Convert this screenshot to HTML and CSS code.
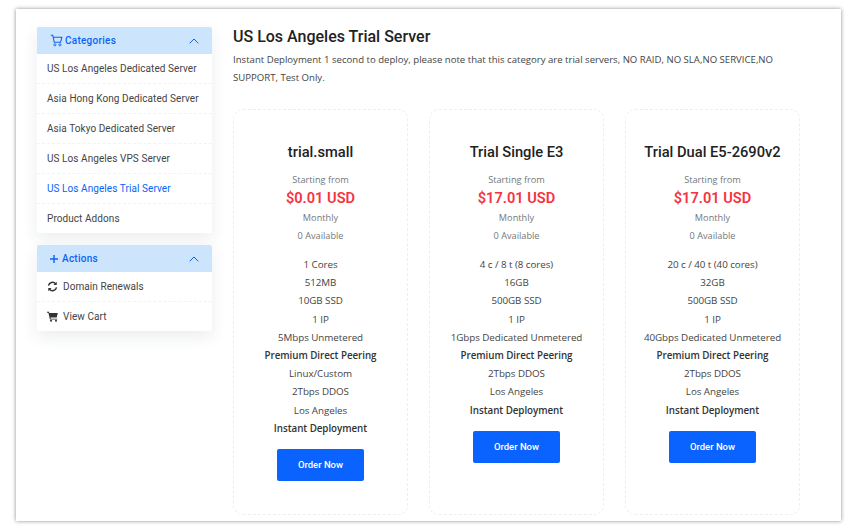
FILE: index.html
```html
<!DOCTYPE html>
<html lang="en">
<head>
<meta charset="utf-8">
<title>US Los Angeles Trial Server</title>
<link rel="stylesheet" href="styles.css">
</head>
<body>
<div class="frame">
  <aside class="sidebar">
    <section class="panel">
      <header class="panel-head">
        <svg class="head-icon" viewBox="0 0 16 16" width="13" height="13"><path d="M1 1.5h2.4l1.8 8.6h7.9l1.5-6.2H3.9" fill="none" stroke="#0a62f5" stroke-width="1.3"/><circle cx="6" cy="13.3" r="1.3" fill="none" stroke="#0a62f5" stroke-width="1.1"/><circle cx="12.2" cy="13.3" r="1.3" fill="none" stroke="#0a62f5" stroke-width="1.1"/></svg>
        <span class="head-title">Categories</span>
        <svg class="chevron" viewBox="0 0 10 6" width="10" height="6"><path d="M.7 5.3 5 1l4.3 4.3" fill="none" stroke="#0a62f5" stroke-width="1"/></svg>
      </header>
      <a class="item">US Los Angeles Dedicated Server</a>
      <a class="item">Asia Hong Kong Dedicated Server</a>
      <a class="item">Asia Tokyo Dedicated Server</a>
      <a class="item">US Los Angeles VPS Server</a>
      <a class="item active">US Los Angeles Trial Server</a>
      <a class="item">Product Addons</a>
    </section>
    <section class="panel">
      <header class="panel-head">
        <svg class="head-icon plus" viewBox="0 0 8 8" width="8" height="8"><path d="M4 0v8M0 4h8" stroke="#0a62f5" stroke-width="1.4"/></svg>
        <span class="head-title">Actions</span>
        <svg class="chevron" viewBox="0 0 10 6" width="10" height="6"><path d="M.7 5.3 5 1l4.3 4.3" fill="none" stroke="#0a62f5" stroke-width="1"/></svg>
      </header>
      <a class="item with-icon">
        <svg viewBox="0 0 12 12" width="11" height="11"><path d="M1.6 5A4.5 4.5 0 0 1 9.4 3M10.4 7A4.5 4.5 0 0 1 2.6 9" fill="none" stroke="#333" stroke-width="1.6"/><path d="M10.6.8v3.6H7zM1.4 11.2V7.6H5z" fill="#333"/></svg>
        Domain Renewals
      </a>
      <a class="item with-icon">
        <svg viewBox="0 0 12 12" width="11" height="11"><path d="M0 .8h2.2l.4 1.4h9.2l-1.2 5H3.8l.3 1.2h7v1H3.2L1.5 1.8H0z" fill="#333"/><circle cx="4.4" cy="10.6" r="1.1" fill="#333"/><circle cx="9.8" cy="10.6" r="1.1" fill="#333"/></svg>
        View Cart
      </a>
    </section>
  </aside>
  <main class="content">
    <h1 class="page-title">US Los Angeles Trial Server</h1>
    <p class="page-desc">Instant Deployment 1 second to deploy, please note that this category are trial servers, NO RAID, NO SLA,NO SERVICE,NO SUPPORT, Test Only.</p>
    <div class="cards">
      <article class="card">
        <h2 class="card-title">trial.small</h2>
        <div class="muted start">Starting from</div>
        <div class="price">$0.01 USD</div>
        <div class="muted cycle">Monthly</div>
        <div class="muted avail">0 Available</div>
        <ul class="features">
          <li>1 Cores</li><li>512MB</li><li>10GB SSD</li><li>1 IP</li><li>5Mbps Unmetered</li>
          <li class="strong">Premium Direct Peering</li><li>Linux/Custom</li><li>2Tbps DDOS</li><li>Los Angeles</li>
          <li class="strong">Instant Deployment</li>
        </ul>
        <a class="order">Order Now</a>
      </article>
      <article class="card">
        <h2 class="card-title">Trial Single E3</h2>
        <div class="muted start">Starting from</div>
        <div class="price">$17.01 USD</div>
        <div class="muted cycle">Monthly</div>
        <div class="muted avail">0 Available</div>
        <ul class="features">
          <li>4 c / 8 t (8 cores)</li><li>16GB</li><li>500GB SSD</li><li>1 IP</li><li>1Gbps Dedicated Unmetered</li>
          <li class="strong">Premium Direct Peering</li><li>2Tbps DDOS</li><li>Los Angeles</li>
          <li class="strong">Instant Deployment</li>
        </ul>
        <a class="order">Order Now</a>
      </article>
      <article class="card">
        <h2 class="card-title">Trial Dual E5-2690v2</h2>
        <div class="muted start">Starting from</div>
        <div class="price">$17.01 USD</div>
        <div class="muted cycle">Monthly</div>
        <div class="muted avail">0 Available</div>
        <ul class="features">
          <li>20 c / 40 t (40 cores)</li><li>32GB</li><li>500GB SSD</li><li>1 IP</li><li>40Gbps Dedicated Unmetered</li>
          <li class="strong">Premium Direct Peering</li><li>2Tbps DDOS</li><li>Los Angeles</li>
          <li class="strong">Instant Deployment</li>
        </ul>
        <a class="order">Order Now</a>
      </article>
    </div>
  </main>
</div>
</body>
</html>
```
FILE: styles.css
```css
* { box-sizing: border-box; }
html, body { height: 100%; }
body {
  margin: 0;
  background: #fff;
  font-family: "Open Sans", sans-serif;
  color: #444;
  overflow: hidden;
}
.frame {
  width: 825px;
  height: 512px;
  margin: 9px 0 0 16px;
  padding: 18px 21px 0;
  display: flex;
  gap: 21px;
  background: #fff;
  box-shadow: 0 0 4px rgba(0, 0, 0, .45);
}
.sidebar {
  width: 175px;
  flex: none;
  display: flex;
  flex-direction: column;
  gap: 12px;
}
.panel {
  background: #fff;
  border-radius: 2px;
  box-shadow: 0 6px 16px rgba(30, 50, 90, .09);
}
.panel-head {
  height: 27px;
  padding: 0 13px;
  display: flex;
  align-items: center;
  gap: 2px;
  background: #cce5fd;
  border-radius: 2px 2px 0 0;
}
.head-title {
  font-family: Roboto, sans-serif;
  font-size: 10px;
  font-weight: 500;
  letter-spacing: .25px;
  color: #0a62f5;
  flex: 1;
}
.chevron { flex: none; }
.head-icon { flex: none; }
.plus { margin-right: 2px; }
.item {
  display: flex;
  align-items: center;
  height: 30px;
  padding: 0 10px;
  font-family: Roboto, sans-serif;
  font-size: 10px;
  letter-spacing: .07px;
  color: #444;
  border-bottom: 1px dashed #f3f3f3;
}
.item:last-child { height: 29px; padding-bottom: 1px; border-bottom: 0; }
.item.active { color: #0a62f5; }
.with-icon { gap: 5px; }
.content { width: 567px; flex: none; padding-top: 1px; }
.page-title {
  margin: 0;
  height: 20px;
  font-family: Roboto, sans-serif;
  font-size: 16px;
  line-height: 18px;
  font-weight: 500;
  color: #222;
}
.page-desc {
  margin: 3px 0 0;
  font-size: 9.6px;
  line-height: 18px;
  color: #444;
}
.cards {
  margin-top: 22px;
  display: flex;
  gap: 21px;
}
.card {
  width: 175px;
  height: 406px;
  padding-top: 33px;
  text-align: center;
  border: 1px dashed #eee;
  border-radius: 10px;
}
.card-title {
  margin: 0;
  font-family: Roboto, sans-serif;
  font-size: 14.7px;
  line-height: 18px;
  font-weight: 500;
  color: #222;
}
.muted {
  font-size: 9.2px;
  line-height: 18px;
  color: #777;
}
.start { margin-top: 10px; }
.price {
  font-family: Roboto, sans-serif;
  font-size: 14.6px;
  line-height: 16px;
  margin-top: 1px;
  font-weight: 600;
  color: #f5333f;
}
.cycle { margin-top: 3px; }
.features {
  list-style: none;
  margin: 11px 0 0;
  padding: 0;
  font-size: 9.8px;
  letter-spacing: -.05px;
  line-height: 18.2px;
  color: #444;
}
.strong { font-weight: 600; color: #333; }
.order {
  display: block;
  width: 87px;
  height: 32px;
  margin: 11px auto 0;
  background: #0a62ff;
  color: #fff;
  border-radius: 2px;
  font-family: Roboto, sans-serif;
  font-size: 9.5px;
  font-weight: 500;
  line-height: 32px;
}
```
